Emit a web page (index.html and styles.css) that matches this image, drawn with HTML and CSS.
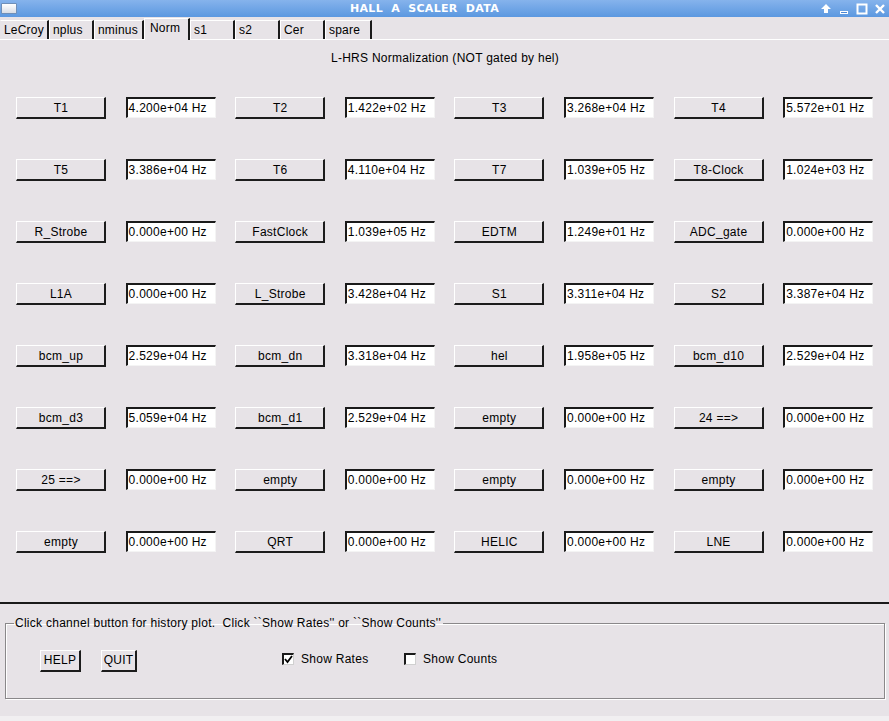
FILE: index.html
```html
<!DOCTYPE html>
<html>
<head>
<meta charset="utf-8">
<link rel="stylesheet" href="styles.css">
</head>
<body>
<div class="window">
  <div class="titlebar">
    <span class="winicon"></span>
    <span class="title">HALL&nbsp;&nbsp;A&nbsp;&nbsp;SCALER&nbsp;&nbsp;DATA</span>
    <span class="wbtns">
      <svg width="12" height="12" viewBox="0 0 12 12"><path d="M6 1 L11 6 L8 6 L8 10 L4 10 L4 6 L1 6 Z" fill="#fff"/></svg>
      <svg width="12" height="12" viewBox="0 0 12 12"><rect x="2" y="8" width="8" height="3" fill="#fff"/><rect x="3" y="9" width="6" height="1" fill="#4a86d6"/></svg>
      <svg width="12" height="12" viewBox="0 0 12 12"><rect x="1.5" y="1.5" width="9" height="9" fill="none" stroke="#fff" stroke-width="2"/></svg>
      <svg width="12" height="12" viewBox="0 0 12 12"><path d="M2 2 L10 10 M10 2 L2 10" stroke="#fff" stroke-width="2.4"/></svg>
    </span>
  </div>
  <div class="tabs">
    <span class="tab w48">LeCroy</span>
    <span class="tab">nplus</span>
    <span class="tab w49">nminus</span>
    <span class="tab sel">Norm</span>
    <span class="tab">s1</span>
    <span class="tab">s2</span>
    <span class="tab">Cer</span>
    <span class="tab w46">spare</span>
  </div>
  <div class="main">
    <div class="heading">L-HRS Normalization (NOT gated by hel)</div>
    <div class="grid">
      <span class="btn">T1</span><span class="field">4.200e+04 Hz</span>
      <span class="btn">T2</span><span class="field">1.422e+02 Hz</span>
      <span class="btn">T3</span><span class="field">3.268e+04 Hz</span>
      <span class="btn">T4</span><span class="field">5.572e+01 Hz</span>

      <span class="btn">T5</span><span class="field">3.386e+04 Hz</span>
      <span class="btn">T6</span><span class="field">4.110e+04 Hz</span>
      <span class="btn">T7</span><span class="field">1.039e+05 Hz</span>
      <span class="btn">T8-Clock</span><span class="field">1.024e+03 Hz</span>

      <span class="btn">R_Strobe</span><span class="field">0.000e+00 Hz</span>
      <span class="btn">FastClock</span><span class="field">1.039e+05 Hz</span>
      <span class="btn">EDTM</span><span class="field">1.249e+01 Hz</span>
      <span class="btn">ADC_gate</span><span class="field">0.000e+00 Hz</span>

      <span class="btn">L1A</span><span class="field">0.000e+00 Hz</span>
      <span class="btn">L_Strobe</span><span class="field">3.428e+04 Hz</span>
      <span class="btn">S1</span><span class="field">3.311e+04 Hz</span>
      <span class="btn">S2</span><span class="field">3.387e+04 Hz</span>

      <span class="btn">bcm_up</span><span class="field">2.529e+04 Hz</span>
      <span class="btn">bcm_dn</span><span class="field">3.318e+04 Hz</span>
      <span class="btn">hel</span><span class="field">1.958e+05 Hz</span>
      <span class="btn">bcm_d10</span><span class="field">2.529e+04 Hz</span>

      <span class="btn">bcm_d3</span><span class="field">5.059e+04 Hz</span>
      <span class="btn">bcm_d1</span><span class="field">2.529e+04 Hz</span>
      <span class="btn">empty</span><span class="field">0.000e+00 Hz</span>
      <span class="btn">24 ==&gt;</span><span class="field">0.000e+00 Hz</span>

      <span class="btn">25 ==&gt;</span><span class="field">0.000e+00 Hz</span>
      <span class="btn">empty</span><span class="field">0.000e+00 Hz</span>
      <span class="btn">empty</span><span class="field">0.000e+00 Hz</span>
      <span class="btn">empty</span><span class="field">0.000e+00 Hz</span>

      <span class="btn">empty</span><span class="field">0.000e+00 Hz</span>
      <span class="btn">QRT</span><span class="field">0.000e+00 Hz</span>
      <span class="btn">HELIC</span><span class="field">0.000e+00 Hz</span>
      <span class="btn">LNE</span><span class="field">0.000e+00 Hz</span>
    </div>
  </div>
  <div class="bottom">
    <fieldset class="group">
      <legend>Click channel button for history plot.&nbsp; Click ``Show Rates'' or ``Show Counts''</legend>
      <div class="controls">
        <span class="sbtn help">HELP</span>
        <span class="sbtn quit">QUIT</span>
        <span class="check rates"><span class="box"><svg width="9" height="9" viewBox="0 0 9 9"><path d="M1 4 L3.5 7 L8 1" fill="none" stroke="#000" stroke-width="1.8"/></svg></span>Show Rates</span>
        <span class="check counts"><span class="box"></span>Show Counts</span>
      </div>
    </fieldset>
  </div>
  <div class="foot"></div>
</div>
</body>
</html>
```

FILE: styles.css
```css
html, body {
  margin: 0;
  padding: 0;
}
body {
  background: #e7e3e7;
  font-family: "Liberation Sans", Arial, sans-serif;
  font-size: 12px;
  letter-spacing: 0.27px;
  color: #000;
}
.window {
  width: 889px;
  height: 721px;
  display: flex;
  flex-direction: column;
  overflow: hidden;
}
.titlebar {
  height: 17px;
  background: linear-gradient(#86b3ec, #5b98e0);
  display: flex;
  align-items: center;
  flex: none;
  letter-spacing: 0;
}
.winicon {
  width: 14px;
  height: 9px;
  margin-left: 1px;
  background: linear-gradient(#ffffff, #d8dde6);
  border: 1px solid #6f8fb8;
  border-radius: 1px;
}
.title {
  flex: 1;
  text-align: center;
  color: #fff;
  font-family: "DejaVu Sans", sans-serif;
  font-weight: bold;
  font-size: 11px;
  letter-spacing: 0.3px;
  padding-left: 12px;
  line-height: 17px;
}
.wbtns {
  display: flex;
  gap: 6px;
  margin-right: 3px;
  align-items: center;
}
.tabs {
  height: 22px;
  display: flex;
  align-items: flex-end;
  border-bottom: 1px solid #ffffff;
  flex: none;
}
.tab {
  width: 45px;
  box-sizing: border-box;
  height: 19px;
  line-height: 19px;
  padding-left: 3px;
  border-left: 1px solid #ffffff;
  border-right: 2px solid #1a1a1a;
  border-top: 1px solid #ffffff;
  letter-spacing: 0.2px;
}
.tab.w48 { width: 49px; border-left-color: transparent; }
.tab.w49 { width: 50px; }
.tab.w46 { width: 47px; }
.tab.sel {
  height: 22px;
  line-height: 19px;
  width: 46px;
  padding-left: 5px;
  position: relative;
  top: 1px;
  background: #e7e3e7;
}
.main {
  flex: none;
  height: 562px;
}
.heading {
  text-align: center;
  margin-top: 10px;
  height: 16px;
  line-height: 16px;
  padding-left: 1px;
}
.grid {
  display: grid;
  grid-template-columns: repeat(8, 90px);
  column-gap: 19.6px;
  row-gap: 40px;
  margin-top: 31px;
  margin-left: 16px;
}
.btn {
  box-sizing: border-box;
  height: 22px;
  text-align: center;
  line-height: 20px;
  border-top: 1px solid #ffffff;
  border-left: 1px solid #ffffff;
  border-right: 2px solid #1c1c1c;
  border-bottom: 2px solid #1c1c1c;
  background: #e7e3e7;
  padding-left: 1px;
  white-space: nowrap;
}
.field {
  box-sizing: border-box;
  height: 21px;
  width: 90px;
  background: #ffffff;
  border-top: 2px solid #1a1a1a;
  border-left: 2px solid #1a1a1a;
  border-right: 1px solid #f4f4f4;
  border-bottom: 1px solid #f4f4f4;
  line-height: 19px;
  padding-left: 1px;
  white-space: nowrap;
  overflow: hidden;
}
.bottom {
  border-top: 2px solid #1a1a1a;
  flex: none;
  height: 114px;
  box-sizing: border-box;
  padding: 12px 4px 0 5px;
}
.group {
  margin: 0;
  padding: 0;
  height: 83px;
  box-sizing: border-box;
  border: 1px solid #8a888a;
  box-shadow: 1px 1px 0 #ffffff, inset 1px 1px 0 #ffffff;
}
.group legend {
  padding: 0 2px 0 1px;
  margin-left: 8px;
  line-height: 14px;
}
.controls {
  position: relative;
  height: 60px;
}
.sbtn {
  position: absolute;
  top: 20px;
  box-sizing: border-box;
  height: 22px;
  line-height: 19px;
  text-align: center;
  border-top: 1px solid #ffffff;
  border-left: 1px solid #ffffff;
  border-right: 2px solid #1c1c1c;
  border-bottom: 2px solid #1c1c1c;
}
.help { left: 34px; width: 41px; }
.quit { left: 95px; width: 36px; }
.check {
  position: absolute;
  top: 22px;
  display: flex;
  align-items: center;
  gap: 7px;
  line-height: 14px;
}
.rates { left: 276px; }
.counts { left: 398px; }
.box {
  box-sizing: border-box;
  width: 12px;
  height: 12px;
  background: #ffffff;
  border-top: 2px solid #1a1a1a;
  border-left: 2px solid #1a1a1a;
  border-right: 1px solid #d0d0d0;
  border-bottom: 1px solid #d0d0d0;
  display: flex;
  align-items: center;
  justify-content: center;
}
.box svg { display: block; margin-left: -1px; margin-top: -1px; }
.foot {
  flex: 1;
  background: #f1eff1;
}
```
